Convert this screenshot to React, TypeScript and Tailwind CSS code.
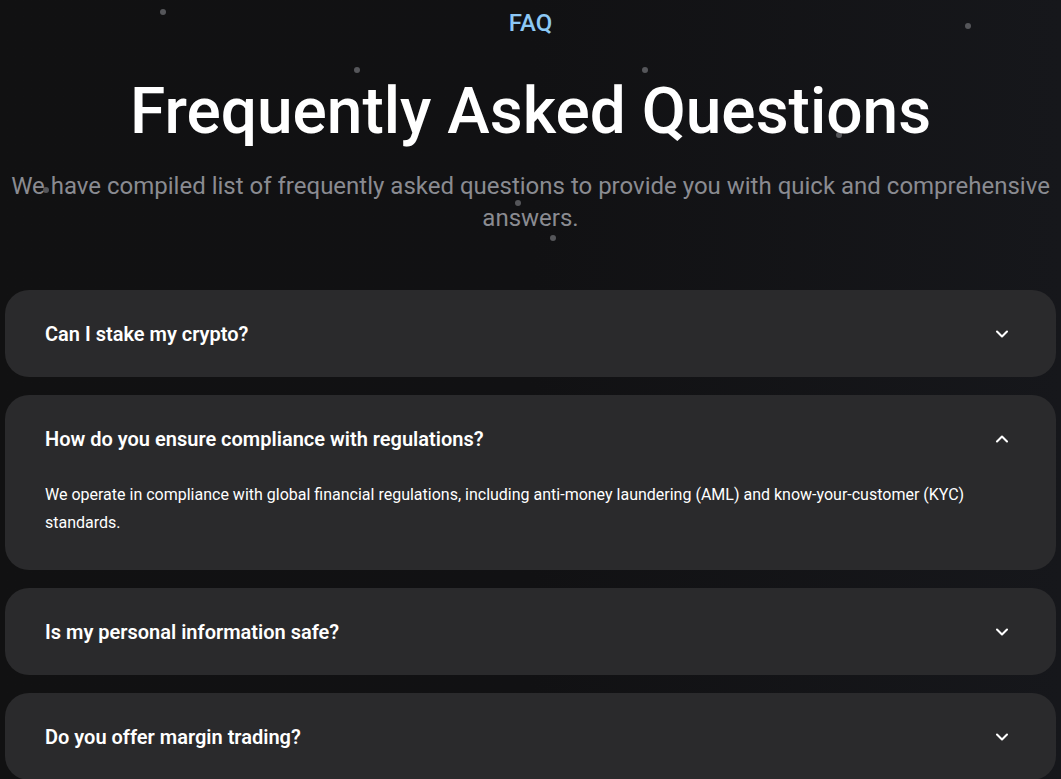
import React, { useState } from 'react';
import { ChevronDown, ChevronUp } from 'lucide-react';

const faqs = [
  {
    q: 'Can I stake my crypto?',
    a: 'Yes, you can stake supported assets directly from your wallet and earn rewards over time.',
  },
  {
    q: 'How do you ensure compliance with regulations?',
    a: 'We operate in compliance with global financial regulations, including anti-money laundering (AML) and know-your-customer (KYC) standards.',
  },
  {
    q: 'Is my personal information safe?',
    a: 'Your data is encrypted and stored securely, and we never share it without your consent.',
  },
  {
    q: 'Do you offer margin trading?',
    a: 'Margin trading is available for eligible users on selected markets.',
  },
];

// background particles
const dots = [
  [163, 12],
  [968, 26],
  [357, 70],
  [645, 70],
  [839, 135],
  [46, 190],
  [518, 203],
  [553, 238],
];

export default function App() {
  const [open, setOpen] = useState<number | null>(1);

  return (
    <div
      className="relative min-h-screen overflow-hidden bg-gradient-to-r from-[#111112] via-[#111113] to-[#16171b] pb-10"
      style={{ fontFamily: 'Roboto, "Liberation Sans", sans-serif' }}
    >
      {dots.map(([x, y], i) => (
        <span
          key={i}
          className="absolute h-[6px] w-[6px] -translate-x-1/2 -translate-y-1/2 rounded-full bg-[#55565a]"
          style={{ left: x, top: y }}
        />
      ))}

      <div className="relative pt-[8px] text-center">
        <p className="text-[24px] font-medium leading-[30px] text-[#8cc8f5]">FAQ</p>
        <h1 className="mt-[34px] text-[64px] font-medium leading-[80px] text-white">
          Frequently Asked Questions
        </h1>
        <p className="mx-auto mt-[18px] text-[24px] leading-[32px] text-[#8a8b91]">
          We have compiled list of frequently asked questions to provide you with quick and comprehensive
          answers.
        </p>
      </div>

      <div className="relative mt-[56px] flex flex-col gap-[18px] px-[5px]">
        {faqs.map((item, i) => {
          const isOpen = open === i;
          return (
            <div key={i} className="rounded-[24px] bg-[#2a2a2c]">
              <button
                onClick={() => setOpen(isOpen ? null : i)}
                className="flex h-[87px] w-full items-center justify-between pl-[40px] pr-[42px] text-left"
              >
                <span className="text-[20px] font-semibold text-white">{item.q}</span>
                <span className="flex h-6 w-6 items-center justify-center text-white">
                  {isOpen ? (
                    <ChevronUp className="h-[20px] w-[20px]" strokeWidth={2.5} />
                  ) : (
                    <ChevronDown className="h-[20px] w-[20px]" strokeWidth={2.5} />
                  )}
                </span>
              </button>
              {isOpen && (
                <p className="-mt-[1px] px-[40px] pb-[33px] pr-[80px] text-[16px] leading-[28px] text-white">
                  {item.a}
                </p>
              )}
            </div>
          );
        })}
      </div>
    </div>
  );
}
